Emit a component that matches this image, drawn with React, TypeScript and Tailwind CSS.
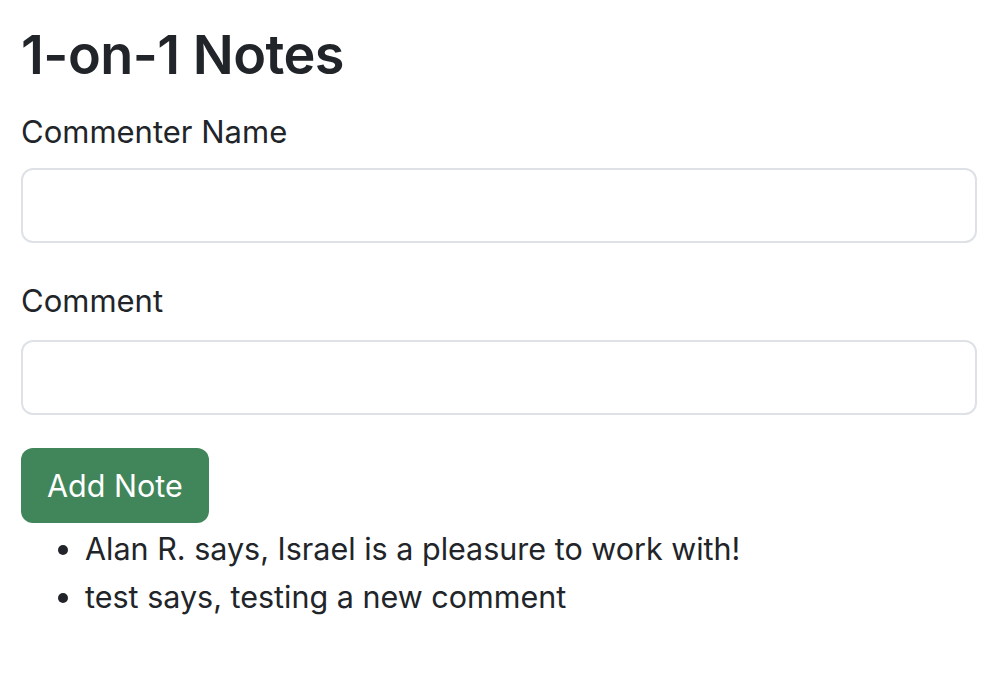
import { useState } from "react";

const notesSeed = [
  { name: "Alan R.", comment: "Israel is a pleasure to work with!" },
  { name: "test", comment: "testing a new comment" },
];

export default function App() {
  const [notes] = useState(notesSeed);

  return (
    <div className="min-h-screen bg-white px-[21px] pt-[21px] text-[#212529] font-['Inter',_'Helvetica_Neue',_Arial,_sans-serif]">
      <h1 className="h-[68px] text-[54px] font-semibold leading-[68px] tracking-[-0.01em]">1-on-1 Notes</h1>

      <label className="mt-[21px] block text-[31px] leading-[44px]">Commenter Name</label>
      <input className="mt-[14px] block h-[75px] w-[956px] rounded-[12px] border-2 border-[#dee2e6] px-[24px] text-[29px] outline-none" />

      <label className="mt-[36px] block text-[31px] leading-[44px]">Comment</label>
      <input className="mt-[17px] block h-[75px] w-[956px] rounded-[12px] border-2 border-[#dee2e6] px-[24px] text-[29px] outline-none" />

      <button className="mt-[33px] block h-[75px] rounded-[12px] bg-[#40865a] px-[26px] text-[30.5px] text-white">
        Add Note
      </button>

      <ul className="mt-[2px] list-disc pl-[64px] text-[30.5px] leading-[48px]">
        {notes.map((n) => (
          <li key={n.name}>
            {n.name} says, {n.comment}
          </li>
        ))}
      </ul>
    </div>
  );
}
